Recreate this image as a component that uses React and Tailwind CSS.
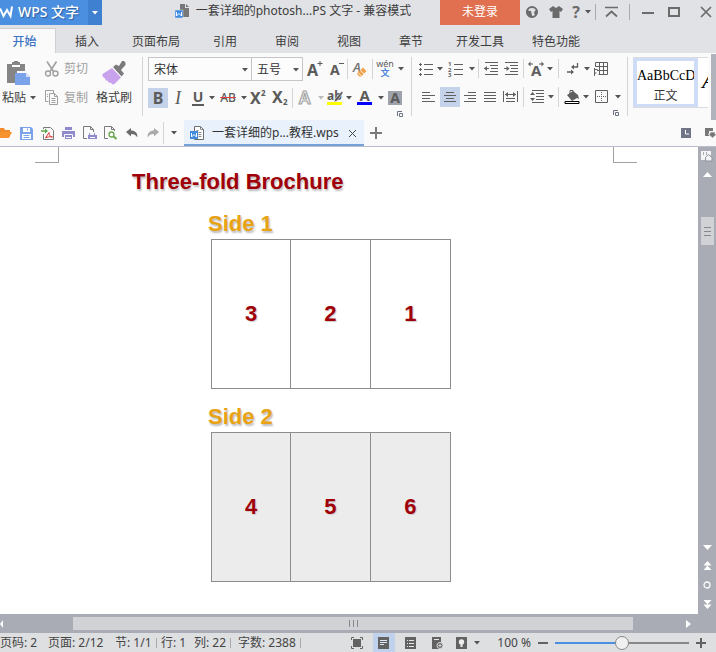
import { useState } from 'react';

const MENU_TABS = [
    { label: '插入', wide: false },
    { label: '页面布局', wide: true },
    { label: '引用', wide: false },
    { label: '审阅', wide: false },
    { label: '视图', wide: false },
    { label: '章节', wide: false },
    { label: '开发工具', wide: true },
    { label: '特色功能', wide: true },
];

function Svg({ w = 16, h = 16, className = '', children }) {
    return (
        <svg width={w} height={h} viewBox={`0 0 ${w} ${h}`} fill="none" className={`shrink-0 overflow-visible ${className}`} aria-hidden="true">
            {children}
        </svg>
    );
}

function Caret({ className = 'text-[#555]' }) {
    return (
        <Svg w={6} h={4} className={className}>
            <path d="M0 0h6L3 3.5z" fill="currentColor" />
        </Svg>
    );
}

function Tool({ title, className = 'w-5', children }) {
    return (
        <button title={title} className={`flex h-5 shrink-0 items-center justify-center ${className}`}>
            {children}
        </button>
    );
}

function Drop({ title, className }) {
    return (
        <button title={title} className="flex h-5 w-2 shrink-0 items-center justify-center">
            <Caret className={className} />
        </button>
    );
}

function Divider({ className = '', color = 'bg-[#d4d4d6]' }) {
    return <span className={`w-px shrink-0 self-stretch ${color} ${className}`} />;
}

function Launcher() {
    return (
        <button title="更多设置" className="mt-[3px] flex self-end">
            <Svg w={6} h={6}>
                <path d="M.5 5V.5H5M5.500 2.500v3h-3v-3z" stroke="#6b7183" />
            </Svg>
        </button>
    );
}

/* Paragraph lines: each entry is [x1, x2] */
function Lines({ rows, children }) {
    const top = rows.length > 4 ? 0.5 : 2.5;

    return (
        <Svg w={14} h={14}>
            {rows.map(([a, b], i) => (
                <path key={i} d={`M${a} ${top + i * 3}H${b}`} stroke="#5f5f5f" />
            ))}
            {children}
        </Svg>
    );
}

function WpsDocIcon() {
    return (
        <Svg w={15} h={15}>
            <path d="M4.500 .5h6l3 3v10h-9z" fill="#fff" stroke="#6d6d6d" />
            <path d="M10.500 .5v3h3M6.500 4.500h2M8.500 6.500h3M8.500 8.500h3M8.500 10.500h3" stroke="#8a8a8a" />
            <path d="M0 5h8v8H0z" fill="#3f8be0" />
            <path d="M1.500 7v4L4 8.500 6.500 11V7" stroke="#fff" />
        </Svg>
    );
}

function TitleBar() {
    return (
        <header className="flex h-7 shrink-0 items-start">
            <div className="flex h-[25px] shrink-0 bg-[#4a8fe0] text-white">
                <button className="flex w-[88px] items-center gap-1 pb-0.5 text-sm font-medium [text-shadow:1px_1px_1px_#2a5f9e]">
                    <Svg w={14} h={14}>
                        <path d="M0 3.500l3.500 7.500L7 5l3.500 6L12 1.500" stroke="#fff" strokeWidth="2" />
                    </Svg>
                    <span className="whitespace-nowrap">WPS 文字</span>
                </button>
                <button title="菜单" className="flex w-[14px] items-center justify-center bg-[#3f80d0]">
                    <Caret className="text-white" />
                </button>
            </div>
            <div className="flex h-[22px] min-w-0 flex-1 items-center justify-center gap-1.5 pl-11">
                <Svg w={15} h={15}>
                    <path d="M5 0h5v4h4v9H5z" fill="#777" />
                    <path d="M11 0l3 3h-3z" fill="#777" />
                    <path d="M0 6h8v8H0z" fill="#3f8be0" stroke="#e1e2e6" strokeWidth=".5" />
                    <path d="M1.500 8v4L4 9.500 6.500 12V8" stroke="#fff" />
                </Svg>
                <h1 className="truncate">一套详细的photosh...PS 文字 - 兼容模式</h1>
            </div>
            <button className="h-[25px] w-20 shrink-0 bg-[#e07050] pb-0.5 text-white">未登录</button>
            <div className="flex h-6 shrink-0 items-center text-[#6b6b6b]">
                <Tool title="在线模板" className="w-6">
                    <Svg w={12} h={12}>
                        <circle cx="6" cy="6" r="5" stroke="currentColor" strokeWidth="2" />
                        <path d="M0 4.500L5 5l1.500 6.500L3 11 1 9zM8 6l3-3 .5 4L9 10z" fill="currentColor" />
                    </Svg>
                </Tool>
                <Tool title="皮肤" className="w-6">
                    <Svg w={14} h={12}>
                        <path d="M4 0l3 2 3-2 4 3-2 3-1.500-1v7h-7V5L2 6 0 3z" fill="currentColor" />
                    </Svg>
                </Tool>
                <Tool title="帮助" className="w-4 text-base font-bold">?</Tool>
                <Drop title="帮助菜单" />
                <Divider className="mx-[3px] my-1" color="bg-[#aaa]" />
                <Tool title="隐藏功能区" className="w-6">
                    <Svg w={13} h={12}>
                        <path d="M0 1.500h13M1 10.500l5.500-5 5.500 5" stroke="currentColor" strokeWidth="1.700" />
                    </Svg>
                </Tool>
                <Divider className="mx-1.5 my-1" color="bg-[#aaa]" />
                <Tool title="最小化" className="w-6">
                    <Svg w={12} h={12}><path d="M0 7h12" stroke="currentColor" strokeWidth="2" /></Svg>
                </Tool>
                <Tool title="最大化" className="w-7">
                    <Svg w={12} h={10}><path d="M1 1h10v8H1z" stroke="currentColor" strokeWidth="2" /></Svg>
                </Tool>
                <Tool title="关闭" className="w-7 pl-2">
                    <Svg w={12} h={12}><path d="M1 1l10 10M11 1L1 11" stroke="currentColor" strokeWidth="1.700" /></Svg>
                </Tool>
            </div>
        </header>
    );
}

function MenuTabs() {
    return (
        <nav className="flex h-[25px] shrink-0">
            <button className="w-14 shrink-0 border-t border-r border-[#cfd0d6] bg-[#fafafa] pt-px pr-1.5 font-medium text-[#3d74c4]">开始</button>
            {MENU_TABS.map((t) => (
                <button key={t.label} className={t.wide ? 'w-[76px] shrink-0 pt-0.5' : 'w-[62px] shrink-0 pt-0.5'}>{t.label}</button>
            ))}
        </nav>
    );
}

function ClipboardGroup() {
    return (
        <div className="flex w-[143px] shrink-0 items-start border-r border-[#d4d4d6] pl-0.5">
            <button className="w-9">
                <span className="flex h-[31px] items-center pl-1">
                    <Svg w={25} h={24}>
                        <path d="M1 3h5V1h2V0h4v1h2v2h5v7h-8v12H1z" fill="#858585" />
                        <path d="M6 4h8v2H6z" fill="#fff" />
                        <path d="M9 12h11l4 4v8H9z" fill="#7ba3ea" />
                        <path d="M20 12v4h4z" fill="#d5e2fa" />
                    </Svg>
                </span>
                <span className="flex h-5 items-center gap-1">粘贴<Caret /></span>
            </button>
            <div className="ml-1.5 w-11 text-[#a0a0a0]">
                <button className="flex h-6 items-center gap-1 whitespace-nowrap">
                    <Svg>
                        <path d="M3 0.500l6.500 10M12.500 .5L6 10.500" stroke="currentColor" strokeWidth="1.600" />
                        <circle cx="4" cy="12.500" r="2.500" stroke="currentColor" strokeWidth="1.400" />
                        <circle cx="11.500" cy="12.500" r="2.500" stroke="currentColor" strokeWidth="1.400" />
                    </Svg>
                    剪切
                </button>
                <button className="mt-[7px] flex h-5 items-center gap-1 whitespace-nowrap">
                    <Svg>
                        <path d="M9.500 3V.5h-8v11h3" stroke="currentColor" />
                        <path d="M5.500 3.500h5l3 3v8h-8zM10.500 3.500v3h3M7.500 8.500h4M7.500 10.500h4M7.500 12.500h4M3 4.500h1M3 6.500h1" stroke="currentColor" />
                    </Svg>
                    复制
                </button>
            </div>
            <button className="ml-2 w-9">
                <span className="flex h-[31px] items-center justify-center">
                    <Svg w={24} h={24}>
                        <path d="M20 0h2l1.500 1.500V4L19 9l3 3.500-2.500 3L11 6l3-2.500L17 5z" fill="#7b7b7b" />
                        <path d="M10 7l9 9.500-6.500 6.500-2 .5-2-2-1.500.5-1.500-2.500-1.500.3-1-2.300L.5 15.500V13z" fill="#c9a2ee" />
                    </Svg>
                </span>
                <span className="flex h-5 items-center whitespace-nowrap">格式刷</span>
            </button>
        </div>
    );
}

function Picker({ label, options, className }) {
    return (
        <div className={`relative h-6 shrink-0 ${className}`}>
            <select aria-label={label} className="h-full w-full appearance-none border border-[#c6c6c8] bg-[#fcfcfc] pt-px pl-[5px]">
                {options.map((o) => <option key={o}>{o}</option>)}
            </select>
            <span className="pointer-events-none absolute top-[11px] right-1"><Caret /></span>
        </div>
    );
}

function FontGroup() {
    return (
        <div className="flex w-[269px] shrink-0 flex-col border-r border-[#d4d4d6] pr-2 pl-[5px] text-[#5b5b5b]">
            <div className="flex h-6 items-center">
                <Picker label="字体" options={['宋体', '黑体', '楷体']} className="w-[104px] text-[#333]" />
                <Picker label="字号" options={['五号', '四号', '三号']} className="-ml-px w-[52px] text-[#333]" />
                <Tool title="增大字号" className="w-6">
                    <Svg>
                        <text x="0" y="15" fontSize="16" fontWeight="700" fill="currentColor">A</text>
                        <path d="M10.500 2.500h5M13 0v5" stroke="currentColor" />
                    </Svg>
                </Tool>
                <Tool title="减小字号">
                    <Svg w={14}>
                        <text x="0" y="14" fontSize="14" fontWeight="700" fill="currentColor">A</text>
                        <path d="M9 2.500h5" stroke="currentColor" />
                    </Svg>
                </Tool>
                <Divider className="my-0.5" />
                <Tool title="清除格式" className="w-6">
                    <Svg>
                        <text x="1" y="11" fontSize="13" fontStyle="italic" fontWeight="600" fill="#777">A</text>
                        <path d="M5 12.500L11 6.500l3.500 3.500-5 5.500H7z" fill="#f0a34f" />
                        <path d="M6.500 12l3 3M8.500 9.500l3.500 3.500" stroke="#fff" strokeWidth=".8" />
                    </Svg>
                </Tool>
                <Divider className="my-0.5" />
                <Tool title="拼音指南" className="w-6 flex-col">
                    <span className="h-2 text-[9px] leading-[8px]">wén</span>
                    <span className="h-2.5 text-[9px] leading-[10px] font-bold text-[#4f86dc]">文</span>
                </Tool>
                <Drop title="拼音选项" />
            </div>
            <div className="mt-[7px] flex h-5 items-center">
                <Tool title="加粗" className="w-5 bg-[#c4d2ea] text-base font-bold">B</Tool>
                <Tool title="倾斜" className="w-5 font-['Liberation_Serif',serif] text-lg italic">I</Tool>
                <Tool title="下划线"><span className="h-4 border-b-2 px-px text-sm leading-[14px] font-bold">U</span></Tool>
                <Drop title="下划线样式" />
                <Tool title="删除线" className="w-6"><span className="text-xs font-medium line-through decoration-[#e23c3c]">AB</span></Tool>
                <Drop title="删除线样式" />
                <Tool title="上标" className="w-5">
                    <Svg>
                        <text x="0" y="14" fontSize="16" fontWeight="700" fill="currentColor">X</text>
                        <text x="11" y="6" fontSize="8" fontWeight="700" fill="currentColor">2</text>
                    </Svg>
                </Tool>
                <Tool title="下标" className="w-6">
                    <Svg>
                        <text x="0" y="13" fontSize="16" fontWeight="700" fill="currentColor">X</text>
                        <text x="11" y="15" fontSize="8" fontWeight="700" fill="currentColor">2</text>
                    </Svg>
                </Tool>
                <Divider />
                <Tool title="文字效果" className="w-6">
                    <Svg>
                        <text x="2" y="14" fontSize="17" fontWeight="600" fill="#fff" stroke="#a2a2a2" strokeWidth="1.200">A</text>
                    </Svg>
                </Tool>
                <Drop title="文字效果选项" className="text-[#bbb]" />
                <Tool title="突出显示">
                    <Svg>
                        <text x="0" y="10" fontSize="12" fontWeight="700" fill="currentColor">ab</text>
                        <path d="M15 1l-7 8-1 3 3-1 6-8z" fill="#5b5b5b" stroke="#fafafa" strokeWidth=".5" />
                        <path d="M0 12h15v3H0z" fill="#ff0" />
                    </Svg>
                </Tool>
                <Drop title="突出显示颜色" />
                <Tool title="字体颜色" className="w-6">
                    <Svg>
                        <text x="2.500" y="11" fontSize="15" fontWeight="700" fill="currentColor">A</text>
                        <path d="M0 12h15v3H0z" fill="#00f" />
                    </Svg>
                </Tool>
                <Drop title="选择字体颜色" />
                <Tool title="字符底纹"><span className="h-[14px] w-[14px] bg-[#9da2ab] text-sm leading-[14px] font-bold">A</span></Tool>
            </div>
            <Launcher />
        </div>
    );
}

function ParagraphGroup() {
    return (
        <div className="flex w-[216px] shrink-0 flex-col border-r border-[#d4d4d6] pr-2 pl-1 text-[#5f5f5f]">
            <div className="flex h-6 items-center">
                <Tool title="项目符号">
                    <Svg w={14} h={14}>
                        <path d="M5 2.500h9M5 7.500h9M5 12.500h9" stroke="currentColor" />
                        <path d="M0 2.500h3M1.500 1v3M0 7.500h3M1.500 6v3M0 12.500h3M1.500 11v3" stroke="currentColor" />
                    </Svg>
                </Tool>
                <Drop title="项目符号样式" />
                <Tool title="编号" className="w-6">
                    <Svg>
                        <path d="M6 3.500h9M6 8.500h9M6 13.500h9" stroke="currentColor" />
                        <text x="0" y="5" fontSize="6" fontWeight="700" fill="currentColor">1</text>
                        <text x="0" y="10.500" fontSize="6" fontWeight="700" fill="currentColor">2</text>
                        <text x="0" y="16" fontSize="6" fontWeight="700" fill="currentColor">3</text>
                    </Svg>
                </Tool>
                <Drop title="编号样式" />
                <Divider className="mx-0.5 my-0.5" />
                <Tool title="减少缩进">
                    <Lines rows={[[1, 14], [6, 14], [7, 14], [6, 14], [1, 14]]}>
                        <path d="M0 6.500h5" stroke="currentColor" />
                        <path d="M0 6.500L3 4v5z" fill="currentColor" />
                    </Lines>
                </Tool>
                <Tool title="增加缩进">
                    <Lines rows={[[1, 14], [6, 14], [7, 14], [6, 14], [1, 14]]}>
                        <path d="M0 6.500h4" stroke="currentColor" />
                        <path d="M5.500 6.500L2.500 4v5z" fill="currentColor" />
                    </Lines>
                </Tool>
                <Divider className="mx-0.5 my-0.5" />
                <Tool title="中文版式">
                    <Svg>
                        <text x="3" y="15" fontSize="15" fontWeight="700" fill="currentColor">A</text>
                        <path d="M1 3h4M11 3h4" stroke="currentColor" />
                        <path d="M0 3l2.500-2.500v5zM16 3L13.500 .5v5z" fill="currentColor" />
                    </Svg>
                </Tool>
                <Drop title="中文版式选项" />
                <Divider className="mx-1 my-0.5" />
                <Tool title="换行符">
                    <Svg w={14} h={14}>
                        <path d="M11.500 1v4H6M1 10h5" stroke="currentColor" strokeWidth="1.300" />
                        <path d="M5 5l3-2.500v5zM8 10L5 7.500v5z" fill="currentColor" />
                    </Svg>
                </Tool>
                <Drop title="换行符选项" />
                <Tool title="表格">
                    <Svg w={14} h={14}>
                        <path d="M1.500 .5h12v12h-9M5.500 .5v12M9.500 .5v12M1.500 4.500h12M3 8.500h10.500M1.500 .5v4M.5 6v8M.5 7.500h3M.5 11h2" stroke="currentColor" />
                    </Svg>
                </Tool>
            </div>
            <div className="mt-[7px] flex h-5 items-center">
                <Tool title="左对齐" className="w-6"><Lines rows={[[1, 9], [1, 14], [1, 9], [1, 14]]} /></Tool>
                <Tool title="居中对齐" className="w-5 bg-[#c4d2ea]"><Lines rows={[[3, 11], [1, 13], [3, 11], [1, 13]]} /></Tool>
                <Tool title="右对齐"><Lines rows={[[5, 13], [1, 13], [5, 13], [1, 13]]} /></Tool>
                <Tool title="两端对齐"><Lines rows={[[1, 13], [1, 13], [1, 13], [1, 13]]} /></Tool>
                <Tool title="分散对齐">
                    <Svg w={15} h={14}>
                        <path d="M.5 1v11M14.500 1v11M3 8.500h9M3 11.500h9M2 4.500h11" stroke="currentColor" />
                        <path d="M2 4.500L5 2v5zM13 4.500L10 2v5z" fill="currentColor" />
                    </Svg>
                </Tool>
                <Divider className="mx-[3px]" />
                <Tool title="行距">
                    <Lines rows={[[2, 14], [6, 14], [6, 14], [6, 14], [2, 14]]}>
                        <path d="M2.500 2L5 5H0zM2.500 11L0 8h5z" fill="currentColor" />
                    </Lines>
                </Tool>
                <Drop title="行距选项" />
                <Divider className="mx-[3px]" />
                <Tool title="底纹颜色">
                    <Svg>
                        <path d="M3 6l6-4 5 4 1 4-2-1-5 3z" fill="#5f5f5f" />
                        <path d="M6 5V1.500h3V4" stroke="currentColor" />
                        <path d="M1 12.500h14v2H1z" fill="#fff" stroke="#000" />
                    </Svg>
                </Tool>
                <Drop title="底纹选项" />
                <Tool title="边框" className="w-6">
                    <Svg w={14} h={14}>
                        <path d="M.5 .5h12v12H.5z" stroke="currentColor" />
                        <path d="M2 6.500h9M6.500 2v9" stroke="currentColor" strokeDasharray="1 1" />
                    </Svg>
                </Tool>
                <Drop title="边框选项" />
            </div>
            <Launcher />
        </div>
    );
}

function StyleGallery() {
    return (
        <div className="mr-[3px] ml-[5px] flex h-[51px] min-w-0 flex-1 items-start overflow-hidden border-y border-[#dcdcde] bg-white text-black">
            <button className="-my-px h-[51px] w-[65px] shrink-0 overflow-hidden border-4 border-[#cfdcf5]">
                <span className="block pt-1 font-['Liberation_Serif',serif] text-sm">AaBbCcD</span>
                <span className="block pt-0.5 text-xs text-[#333]">正文</span>
            </button>
            <button title="标题 1" className="pt-1.5 pl-1 font-['Liberation_Serif',serif] text-2xl italic">A</button>
        </div>
    );
}

function Ribbon() {
    return (
        <section className="flex h-[67px] shrink-0 overflow-hidden bg-[#fafafa]">
            <div className="flex h-[63px] min-w-0 flex-1 pt-1">
                <ClipboardGroup />
                <FontGroup />
                <ParagraphGroup />
                <StyleGallery />
            </div>
            <div className="mt-px w-[5px] shrink-0 bg-[#b0b2bc]" />
        </section>
    );
}

function QuickBar() {
    return (
        <div className="flex h-[27px] shrink-0 items-center border-b border-[#b9bccb] bg-[#fafafa] text-[#6b6b6b]">
            <Tool title="打开" className="w-4">
                <Svg w={16} h={12}>
                    <path d="M0 1h4l1 2h5v2H0z" fill="#f08a2c" />
                    <path d="M0 5h12l-3 6H0z" fill="#f7932e" />
                </Svg>
            </Tool>
            <Tool title="保存" className="w-[21px]">
                <Svg w={13} h={13}>
                    <path d="M0 0h11l2 2v11H0z" fill="#7ba3ea" />
                    <path d="M3 1h7v4H3zM2 7h9v5H2z" fill="#fff" />
                    <path d="M3.500 8.500h6M3.500 10.500h6M7.500 1.500v2" stroke="#7ba3ea" />
                </Svg>
            </Tool>
            <Tool title="输出为PDF" className="w-[21px]">
                <Svg w={13} h={13}>
                    <path d="M2.500 2V.5h7l3 3v9h-10V7" stroke="#7a7a7a" />
                    <path d="M0 4h5" stroke="#5da648" strokeWidth="1.500" />
                    <path d="M4 1.500L7 4 4 6.500z" fill="#5da648" />
                    <path d="M4.500 11L8 5.500c0 3 1 4 3.500 4.500-3-.5-5-.2-7 1z" stroke="#e03b3b" />
                </Svg>
            </Tool>
            <Tool title="打印" className="w-[21px]">
                <Svg w={13} h={13}>
                    <path d="M3 0h7v3H3zM0 4h13v6H0z" fill="#8f8acb" />
                    <path d="M2.500 7.500h8v5h-8z" fill="#8f8acb" stroke="#fafafa" />
                    <path d="M4 10.500h5" stroke="#fff" />
                </Svg>
            </Tool>
            <Tool title="直接打印" className="w-[21px]">
                <Svg w={14} h={14}>
                    <path d="M4 12.500H.5V.5h7l3 3V6M7.500 .5v3h3" stroke="#7a7a7a" />
                    <path d="M6 7h1v2h4V7h1v2h2v4H5V9h1z" fill="#8f8acb" />
                    <path d="M7 11.500h5" stroke="#fff" />
                </Svg>
            </Tool>
            <Tool title="打印预览" className="w-[21px]">
                <Svg w={13} h={14}>
                    <path d="M4 12.500H.5V.5h7l3 3V5M7.500 .5v3h3" stroke="#7a7a7a" />
                    <circle cx="7.500" cy="8.500" r="2.500" stroke="#6aa84f" strokeWidth="1.300" />
                    <path d="M9 10l3.500 3" stroke="#6aa84f" strokeWidth="2" />
                </Svg>
            </Tool>
            <Tool title="撤销" className="w-[21px]">
                <Svg w={12} h={10}>
                    <path d="M0 4l5-4v2.500c4 0 6.500 2 6.500 7C10 7 8 6 5 6v2.500z" fill="#6b6b6b" />
                </Svg>
            </Tool>
            <Tool title="恢复" className="w-[21px]">
                <Svg w={12} h={10}>
                    <path d="M12 4L7 0v2.500C3 2.500.5 4.500.5 9.500 2 7 4 6 7 6v2.500z" fill="#aaa" />
                </Svg>
            </Tool>
            <Divider className="my-0.5" />
            <Tool title="自定义快速访问工具栏"><Caret /></Tool>
            <div className="flex h-full w-[180px] shrink-0 items-center bg-[#e8f1fc] pl-1.5 text-[#333] shadow-[inset_0_-2px_#76a0d8]">
                <WpsDocIcon />
                <span className="ml-[7px] flex-1 truncate">一套详细的p...教程.wps</span>
                <Tool title="关闭文档" className="w-6">
                    <Svg w={9} h={9}><path d="M1 1l7 7M8 1L1 8" stroke="#444" /></Svg>
                </Tool>
            </div>
            <Tool title="新建" className="w-6">
                <Svg w={12} h={12}><path d="M0 6h12M6 0v12" stroke="#7a7a7a" strokeWidth="2" /></Svg>
            </Tool>
            <div className="ml-auto flex gap-3">
                <Tool title="历史" className="w-3">
                    <Svg w={10} h={10}>
                        <path d="M0 0h10v10H0z" fill="#6f7486" />
                        <path d="M4.500 2v4H8" stroke="#fff" />
                    </Svg>
                </Tool>
                <Tool title="窗口" className="w-3">
                    <Svg w={12} h={10}>
                        <path d="M1 0h8v3H5v5H1z" fill="#777" />
                        <path d="M6 4h5v2h2L8.500 10 4 6h2z" fill="#777" stroke="#fafafa" strokeWidth=".6" />
                    </Svg>
                </Tool>
            </div>
        </div>
    );
}

function Side({ title, panels, shaded }) {
    return (
        <section className="mt-4 w-[240px]">
            <h3 className="-ml-[3px] pb-[3px] text-[22px] leading-6 font-bold text-[#e8a213] [text-shadow:1px_2px_2px_#bbb]">{title}</h3>
            <div className={`grid h-[150px] grid-cols-3 divide-x divide-[#8c8c8c] border border-[#8c8c8c] ${shaded ? 'bg-[#ececec]' : 'bg-white'}`}>
                {panels.map((n) => (
                    <div key={n} className="flex items-center justify-center text-[22px] font-bold text-[#a00008] [text-shadow:1px_1px_1px_#ccc]">{n}</div>
                ))}
            </div>
        </section>
    );
}

function DocumentPage() {
    return (
        <main className="min-w-0 flex-1 overflow-hidden bg-white pr-[26px]">
            <div className="mx-auto w-[602px]">
                {/* page margin corners */}
                <div className="flex h-4 justify-between">
                    <span className="w-6 border-r border-b border-[#a0a0a0]" />
                    <span className="w-6 border-b border-l border-[#a0a0a0]" />
                </div>
                <article className="pl-[97px] font-['Liberation_Sans',Arial,sans-serif]">
                    <h2 className="pt-[5px] text-[22px] leading-7 font-bold text-[#a00008] [text-shadow:1px_2px_2px_#bbb]">Three-fold Brochure</h2>
                    <div className="pl-[79px]">
                        <Side title="Side 1" panels={[3, 2, 1]} />
                        <Side title="Side 2" panels={[4, 5, 6]} shaded />
                    </div>
                </article>
            </div>
        </main>
    );
}

function VerticalScroll() {
    return (
        <aside className="flex w-[18px] shrink-0 flex-col items-center bg-[#a9abb5] pt-1 text-white">
            <button title="标尺">
                <Svg w={12} h={11} className="block">
                    <path d="M0 0h10v4L5 9H0z" fill="#f4f4f6" />
                    <path d="M2.500 1v3M5.500 1v3" stroke="#a9abb5" />
                    <path d="M7.500 3.500l3.500 3v3.500H4.500V6.500z" fill="#f4f4f6" stroke="#8d8f9b" />
                </Svg>
            </button>
            <button title="向上滚动" className="mt-2.5">
                <Svg w={9} h={5} className="block"><path d="M0 5h9L4.500 0z" fill="currentColor" /></Svg>
            </button>
            <div className="mt-10 flex h-7 w-[13px] flex-col items-center justify-center gap-[3px] bg-[#d1d2d6]">
                <span className="h-px w-[7px] bg-[#888]" />
                <span className="h-px w-[7px] bg-[#888]" />
                <span className="h-px w-[7px] bg-[#888]" />
            </div>
            <div className="mt-auto flex flex-col items-center gap-[11px] pb-[5px]">
                <button title="向下滚动">
                    <Svg w={9} h={5} className="block"><path d="M0 0h9L4.500 5z" fill="currentColor" /></Svg>
                </button>
                <button title="上一页">
                    <Svg w={9} h={9} className="block"><path d="M0.500 4.500h8L4.500 0zM.5 9h8L4.500 4.500z" fill="currentColor" /></Svg>
                </button>
                <button title="选择浏览对象">
                    <Svg w={8} h={8} className="block"><circle cx="4" cy="4" r="3" stroke="currentColor" strokeWidth="1.300" /></Svg>
                </button>
                <button title="下一页">
                    <Svg w={9} h={9} className="block"><path d="M0.500 0h8L4.500 4.500zM.5 4.500h8L4.500 9z" fill="currentColor" /></Svg>
                </button>
            </div>
        </aside>
    );
}

function HorizontalScroll() {
    return (
        <div className="flex h-[19px] shrink-0 items-center justify-between bg-[#a9abb5] pr-[25px] text-white">
            <button title="向左滚动" className="w-[73px]">
                <Svg w={3} h={8}><path d="M3 0v8L0 4z" fill="currentColor" /></Svg>
            </button>
            <div className="flex h-[13px] flex-1 items-center justify-center gap-[3px] bg-[#d1d2d6]">
                <span className="h-[7px] w-px bg-[#888]" />
                <span className="h-[7px] w-px bg-[#888]" />
                <span className="h-[7px] w-px bg-[#888]" />
            </div>
            <button title="向右滚动" className="flex w-[58px] justify-end">
                <Svg w={5} h={8}><path d="M0 0v8l5-4z" fill="currentColor" /></Svg>
            </button>
        </div>
    );
}

function StatusBar() {
    const [zoom, setZoom] = useState(100);

    return (
        <footer className="flex h-[19px] shrink-0 items-center bg-[#dedfe1] pt-px whitespace-nowrap text-[#444]">
            <span className="w-12">页码: 2</span>
            <span className="w-[67px]">页面: 2/12</span>
            <span className="w-[41px]">节: 1/1</span>
            <Divider className="my-1 mr-1" color="bg-[#aaa]" />
            <span className="w-[33px]">行: 1</span>
            <span className="w-9">列: 22</span>
            <Divider className="my-1 mr-[7px]" color="bg-[#aaa]" />
            <span className="w-[62px]">字数: 2388</span>
            <Divider className="my-1" color="bg-[#aaa]" />
            <div className="ml-auto flex h-full items-center text-[#626262]">
                <Tool title="全屏显示" className="w-8">
                    <Svg w={12} h={12}>
                        <path d="M.5 3V.5H3M9 .5h2.500V3M11.500 9v2.500H9M3 11.500H.5V9" stroke="currentColor" />
                        <path d="M2 2h8v8H2z" fill="currentColor" />
                    </Svg>
                </Tool>
                <Tool title="页面视图" className="w-[22px] bg-[#c0d1ec]">
                    <Svg w={12} h={12}>
                        <path d="M0 0h11v12H0z" fill="currentColor" />
                        <path d="M2 3.500h7M2 5.500h7M2 7.500h4" stroke="#dfe7f4" />
                    </Svg>
                </Tool>
                <Tool title="大纲" className="w-8">
                    <Svg w={12} h={12}>
                        <path d="M0 0h11v12H0z" fill="currentColor" />
                        <path d="M2 3.500h1M4 3.500h5M2 6.500h1M4 6.500h5M2 9.500h1M4 9.500h5" stroke="#e6e6e6" />
                    </Svg>
                </Tool>
                <Tool title="Web版式" className="w-[22px]">
                    <Svg w={12} h={12}>
                        <path d="M0 0h9v12H0z" fill="currentColor" />
                        <path d="M2 2.500h5" stroke="#e6e6e6" />
                        <circle cx="8" cy="8.500" r="3" fill="#626262" stroke="#dedfe1" />
                        <path d="M6.500 8.500h3M8 7v3" stroke="#dedfe1" />
                    </Svg>
                </Tool>
                <Tool title="护眼模式" className="w-6">
                    <Svg w={11} h={12}>
                        <path d="M0 0h11v12H0z" fill="currentColor" />
                        <circle cx="5.500" cy="5" r="2.700" fill="#ededed" />
                        <path d="M4.500 7h2v3h-2z" fill="#ededed" />
                    </Svg>
                </Tool>
                <Drop title="护眼选项" />
                <output htmlFor="zoom" className="w-[52px] pr-0.5 text-right text-[#444]">{zoom} %</output>
                <Tool title="缩小">
                    <Svg w={10} h={10}><path d="M0 5h10" stroke="currentColor" strokeWidth="2" /></Svg>
                </Tool>
                <input
                    id="zoom"
                    type="range"
                    aria-label="显示比例"
                    min="0"
                    max="200"
                    value={zoom}
                    onChange={(e) => setZoom(Number(e.target.value))}
                    className="mx-0.5 h-4 w-[134px] appearance-none bg-transparent [&::-webkit-slider-runnable-track]:h-0.5 [&::-webkit-slider-runnable-track]:bg-linear-to-r [&::-webkit-slider-runnable-track]:from-[#4a8fe0] [&::-webkit-slider-runnable-track]:from-50% [&::-webkit-slider-runnable-track]:to-[#888] [&::-webkit-slider-runnable-track]:to-50% [&::-webkit-slider-thumb]:-mt-1.5 [&::-webkit-slider-thumb]:h-3.5 [&::-webkit-slider-thumb]:w-3.5 [&::-webkit-slider-thumb]:appearance-none [&::-webkit-slider-thumb]:rounded-full [&::-webkit-slider-thumb]:border [&::-webkit-slider-thumb]:border-[#888] [&::-webkit-slider-thumb]:bg-[#f0f0f0]"
                />
                <Tool title="放大" className="w-[25px] pr-1.5">
                    <Svg w={10} h={10}><path d="M0 5h10M5 0v10" stroke="currentColor" strokeWidth="2" /></Svg>
                </Tool>
            </div>
        </footer>
    );
}

export default function App() {
    return (
        <div className="flex h-screen flex-col overflow-hidden bg-[#e1e2e6] font-['Noto_Sans','Noto_Sans_CJK_SC',sans-serif] text-xs text-[#3c3c3c]">
            <TitleBar />
            <MenuTabs />
            <Ribbon />
            <QuickBar />
            <div className="flex min-h-0 flex-1">
                <DocumentPage />
                <VerticalScroll />
            </div>
            <HorizontalScroll />
            <StatusBar />
        </div>
    );
}
